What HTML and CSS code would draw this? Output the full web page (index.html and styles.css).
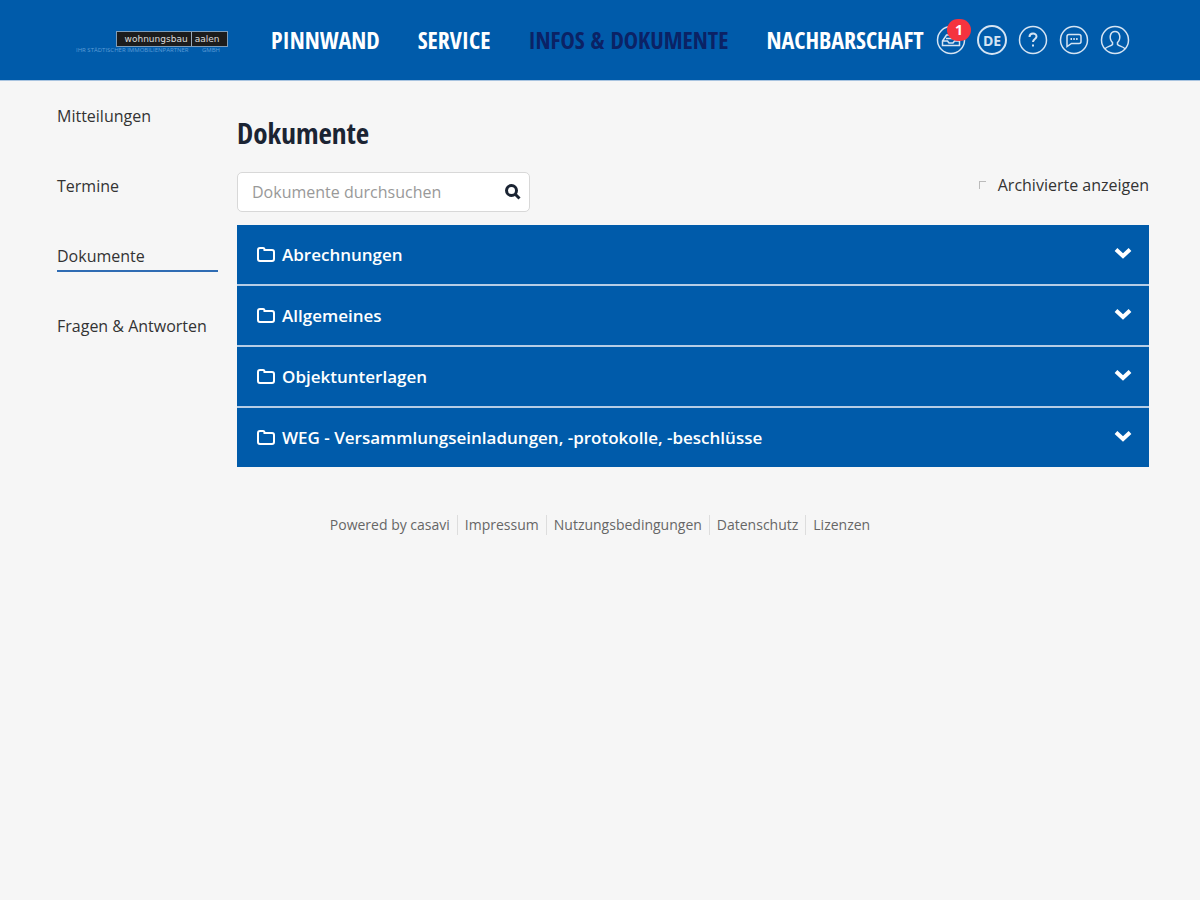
FILE: index.html
```html
<!DOCTYPE html>
<html lang="de">

<head>
    <meta charset="UTF-8">
    <meta name="viewport" content="width=device-width, initial-scale=1.0">
    <title>Dokumente</title>
    <link rel="stylesheet" href="styles.css">
</head>

<body>
    <header class="header">
        <a href="#" class="logo">
            <span class="logo-name">wohnungsbau<i class="logo-bar"></i>aalen</span>
            <span class="logo-claim"><span>IHR STÄDTISCHER IMMOBILIENPARTNER</span><span>GMBH</span></span>
        </a>
        <nav class="main-nav">
            <a href="#">PINNWAND</a>
            <a href="#">SERVICE</a>
            <a href="#" class="active">INFOS &amp; DOKUMENTE</a>
            <a href="#">NACHBARSCHAFT</a>
        </nav>
        <div class="tools">
            <button class="tool" type="button" aria-label="Postfach">
                <svg viewBox="0 0 30 30">
                    <circle cx="15" cy="15" r="13.5" />
                    <path d="M6.500 16l4-6h9l4 6v4.500h-17zM6.500 16h5l1.500 2h4l1.500-2h5M10 13.500h10" />
                </svg>
                <span class="badge">1</span>
            </button>
            <button class="tool lang" type="button">DE</button>
            <button class="tool" type="button" aria-label="Hilfe">
                <svg viewBox="0 0 30 30">
                    <circle cx="15" cy="15" r="13.500" />
                    <path class="thick" d="M11.500 12c0-4.500 7-4.500 7-.5 0 2.500-3.500 2.500-3.500 5.500M15 19.500v2" />
                </svg>
            </button>
            <button class="tool" type="button" aria-label="Nachrichten">
                <svg viewBox="0 0 30 30">
                    <circle cx="15" cy="15" r="13.500" />
                    <path d="M10 9.500h10q2 0 2 2v5q0 2-2 2h-7.500l-4.500 3v-10q0-2 2-2z" />
                    <path class="thick" d="M11.500 14h1.500M14.300 14h1.500M17.100 14h1.500" />
                </svg>
            </button>
            <button class="tool" type="button" aria-label="Profil">
                <svg viewBox="0 0 30 30">
                    <circle cx="15" cy="15" r="13.500" />
                    <path d="M5 24c1-2.500 6-2.500 7.500-4.500v-2c-4-4-2.500-11 2.500-11s6.500 7 2.500 11v2c1.500 2 6.500 2 7.500 4.500" />
                </svg>
            </button>
        </div>
    </header>

    <div class="page">
        <nav class="side-nav">
            <a href="#">Mitteilungen</a>
            <a href="#">Termine</a>
            <a href="#" class="active">Dokumente</a>
            <a href="#">Fragen &amp; Antworten</a>
        </nav>

        <main class="content">
            <h1>Dokumente</h1>
            <div class="filter">
                <form class="search">
                    <input type="text" placeholder="Dokumente durchsuchen" aria-label="Dokumente durchsuchen">
                    <button type="submit" aria-label="Suchen">
                        <svg viewBox="0 0 16 16">
                            <circle cx="6.500" cy="6.500" r="5" />
                            <path d="M10.500 10.500l4 4" />
                        </svg>
                    </button>
                </form>
                <label class="archive"><input type="checkbox"> Archivierte anzeigen</label>
            </div>

            <div class="folders">
                <button class="folder" type="button">
                    <svg class="icon" viewBox="0 0 18 16"><path d="M1 3q0-2 2-2h3q1.500 0 1.500 2h7.500q2 0 2 2v7q0 2-2 2h-12q-2 0-2-2z" /></svg>
                    <span>Abrechnungen</span>
                    <svg class="arrow" viewBox="0 0 18 12"><path d="M2 2.500l7 6.500 7-6.500" /></svg>
                </button>
                <button class="folder" type="button">
                    <svg class="icon" viewBox="0 0 18 16"><path d="M1 3q0-2 2-2h3q1.500 0 1.500 2h7.500q2 0 2 2v7q0 2-2 2h-12q-2 0-2-2z" /></svg>
                    <span>Allgemeines</span>
                    <svg class="arrow" viewBox="0 0 18 12"><path d="M2 2.500l7 6.500 7-6.500" /></svg>
                </button>
                <button class="folder" type="button">
                    <svg class="icon" viewBox="0 0 18 16"><path d="M1 3q0-2 2-2h3q1.500 0 1.500 2h7.500q2 0 2 2v7q0 2-2 2h-12q-2 0-2-2z" /></svg>
                    <span>Objektunterlagen</span>
                    <svg class="arrow" viewBox="0 0 18 12"><path d="M2 2.500l7 6.500 7-6.500" /></svg>
                </button>
                <button class="folder" type="button">
                    <svg class="icon" viewBox="0 0 18 16"><path d="M1 3q0-2 2-2h3q1.500 0 1.500 2h7.500q2 0 2 2v7q0 2-2 2h-12q-2 0-2-2z" /></svg>
                    <span>WEG - Versammlungseinladungen, -protokolle, -beschlüsse</span>
                    <svg class="arrow" viewBox="0 0 18 12"><path d="M2 2.500l7 6.500 7-6.500" /></svg>
                </button>
            </div>
        </main>
    </div>

    <footer class="footer">
        <a href="#">Powered by casavi</a>
        <a href="#">Impressum</a>
        <a href="#">Nutzungsbedingungen</a>
        <a href="#">Datenschutz</a>
        <a href="#">Lizenzen</a>
    </footer>
</body>

</html>
```
FILE: styles.css
```css
* {
    box-sizing: border-box;
    margin: 0;
    padding: 0;
}

body {
    background-color: #f6f6f6;
    color: #333;
    font-family: "Open Sans", sans-serif;
    font-size: 16px;
    line-height: 24px;
}

a {
    color: inherit;
    text-decoration: none;
}

button {
    border: none;
    background: none;
    font-family: inherit;
    cursor: pointer;
}

svg {
    display: block;
    fill: none;
    stroke: currentColor;
}

.header {
    display: flex;
    align-items: center;
    height: 81px;
    padding: 0 70px 0 76px;
    background-color: #005baa;
    border-bottom: 1px solid #a9c4e0;
    color: #fff;
}

.logo {
    display: flex;
    flex-direction: column;
    width: 152px;
    margin-right: 43px;
    padding-top: 4px;
}

.logo-name {
    display: flex;
    align-items: center;
    justify-content: center;
    align-self: flex-end;
    width: 112px;
    height: 16px;
    background-color: #1c1c1c;
    border: 1px solid #7f9db9;
    color: #ddd;
    font-family: "DejaVu Sans", sans-serif;
    font-size: 9px;
    line-height: 14px;
}

.logo-bar {
    width: 1px;
    height: 14px;
    margin: 0 3px;
    background-color: #9ab;
}

.logo-claim {
    display: flex;
    justify-content: space-between;
    padding-right: 8px;
    color: #5d9bd6;
    font-size: 6px;
    line-height: 6px;
}

.main-nav {
    display: flex;
    flex: 1;
    gap: 38px;
    font-family: "Open Sans Condensed", "Liberation Sans Narrow", "Open Sans", sans-serif;
    font-size: 24px;
    font-weight: bold;
    white-space: nowrap;
}

.main-nav .active {
    color: #0b2265;
}

.tools {
    display: flex;
    gap: 11px;
}

.tool {
    position: relative;
    width: 30px;
    height: 30px;
    color: #d5e4f3;
}

.tool svg {
    stroke-width: 1.5;
}

.tool .thick {
    stroke-width: 2;
}

.lang {
    border: 2px solid #d5e4f3;
    border-radius: 50%;
    font-size: 14px;
    font-weight: bold;
}

.badge {
    position: absolute;
    top: -6px;
    right: -5px;
    width: 24px;
    height: 22px;
    border-radius: 11px;
    background-color: #f5333f;
    color: #fff;
    font-size: 14px;
    font-weight: bold;
    line-height: 22px;
}

.page {
    display: flex;
    gap: 19px;
    padding: 23px 51px 0 57px;
}

.side-nav {
    display: flex;
    flex-direction: column;
    gap: 42px;
    width: 161px;
}

.side-nav a {
    height: 28px;
    border-bottom: 2px solid transparent;
    white-space: nowrap;
}

.side-nav .active {
    border-color: #2f6cb3;
}

.content {
    flex: 1;
}

.content h1 {
    padding-top: 10px;
    color: #1b2433;
    font-family: "Open Sans Condensed", "Liberation Sans Narrow", "Open Sans", sans-serif;
    font-size: 29px;
    line-height: 38px;
}

.filter {
    display: flex;
    justify-content: space-between;
    padding: 20px 0 13px;
}

.search {
    display: flex;
    align-items: center;
    width: 293px;
    height: 40px;
    padding: 0 8px 0 14px;
    border: 1px solid #d8d8d8;
    border-radius: 5px;
    background-color: #fff;
}

.search input {
    flex: 1;
    min-width: 0;
    border: none;
    outline: none;
    background: none;
    color: #333;
    font-family: inherit;
    font-size: 16px;
}

.search input::placeholder {
    color: #999;
}

.search button {
    color: #1b2433;
}

.search svg {
    width: 16px;
    height: 16px;
    stroke-width: 3;
}

.archive {
    display: flex;
    align-items: center;
    gap: 12px;
    height: 26px;
}

.archive input {
    appearance: none;
    width: 7px;
    height: 8px;
    border-top: 1px solid #bbb;
    border-left: 1px solid #bbb;
}

.folders {
    display: flex;
    flex-direction: column;
    gap: 2px;
    background-color: #b5cde6;
}

.folder {
    display: flex;
    align-items: center;
    gap: 7px;
    height: 59px;
    padding: 0 17px 0 20px;
    background-color: #005baa;
    color: #fff;
    font-size: 17px;
    font-weight: 600;
    text-align: left;
}

.folder span {
    flex: 1;
}

.icon {
    width: 18px;
    height: 16px;
    stroke-width: 2;
}

.arrow {
    width: 18px;
    height: 12px;
    margin-bottom: 4px;
    stroke-width: 4;
}

.footer {
    display: flex;
    justify-content: center;
    padding: 48px 0;
    color: #666;
    font-size: 14px;
    line-height: 20px;
}

.footer a {
    padding: 0 7px;
}

.footer a + a {
    border-left: 1px solid #ddd;
}
```
